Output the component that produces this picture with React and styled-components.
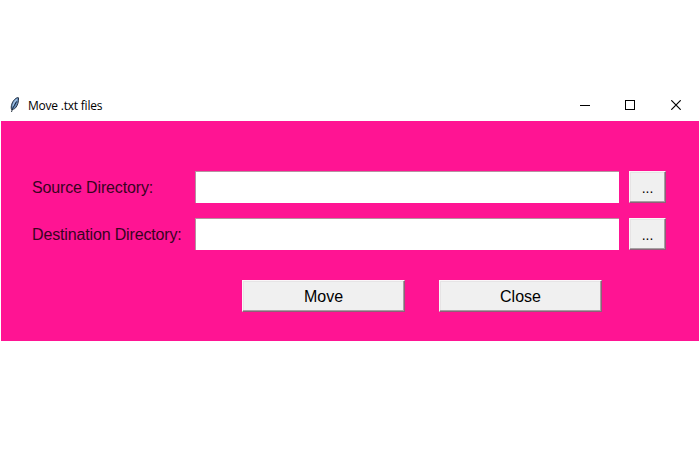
import React, { useState } from "react";
import styled, { createGlobalStyle } from "styled-components";

const GlobalStyle = createGlobalStyle`
  * { box-sizing: border-box; }
  body { margin: 0; background: #fff; }
`;

const Page = styled.main`
  height: 467px;
  padding: 89px 1px 0;
  background: #fff;
  font-family: "Liberation Sans", Arial, sans-serif;
`;

const TitleBar = styled.header`
  display: flex;
  align-items: center;
  height: 32px;
  padding-left: 7px;
`;

const Title = styled.h1`
  flex: 1;
  margin: 1px 0 0 7px;
  font: 400 12px/16px "Open Sans", "Noto Sans", sans-serif;
  letter-spacing: -0.22px;
  color: #000;
`;

const WindowControl = styled.button`
  display: flex;
  align-items: center;
  justify-content: center;
  width: ${(p) => p.$width}px;
  height: 32px;
  padding: 0;
  border: 0;
  background: transparent;
`;

const Form = styled.form`
  height: 220px;
  padding: 50px 33px 0 31px;
  background: #ff1493;
`;

const Field = styled.div`
  display: grid;
  grid-template-columns: 163px 424px 47px;
  align-items: start;
  height: 47px;
`;

const Label = styled.label`
  font-size: 16px;
  line-height: 34px;
  letter-spacing: -0.15px;
  white-space: nowrap;
  color: #38031f;
`;

const Input = styled.input`
  width: 424px;
  height: 32px;
  padding: 0 4px;
  border: 0 solid #b5929f;
  border-width: 1px 0 0 1px;
  border-radius: 0;
  background: #fff;
  font: 16px "Liberation Sans", Arial, sans-serif;
  outline: none;
`;

const Button = styled.button`
  width: ${(p) => p.$width}px;
  height: 32px;
  padding: 2px 0 0;
  border: 1px solid;
  border-color: #fbf6f8 #8e6078 #8e6078 #fbf6f8;
  border-radius: 0;
  background: #f0f0f0;
  box-shadow: inset -1px -1px #a5a0a2, inset 1px 1px #e6e4e5;
  color: #000;
  font: 16px/28px "Liberation Sans", Arial, sans-serif;
`;

const BrowseButton = styled(Button)`
  margin-left: 10px;
  font-size: 14px;
`;

const Actions = styled.div`
  display: flex;
  gap: 34px;
  padding: 15px 0 0 210px;
`;

function FeatherIcon() {
  return (
    <svg width="13" height="18" viewBox="0 0 13 18" aria-hidden="true">
      <path d="M3.5 13.5C2.6 10.5 4 5.8 6.8 3.3C8.2 2 9.7 1.2 10.5 1.8C10.9 5.5 9.6 9.5 7.6 11.8C6.4 13.1 5 13.3 4 13.5Z" fill="#678dbb" stroke="#182536" strokeWidth=".9" />
      <path d="M5 10.5C5.4 7.5 7 4.8 9 3.2" fill="none" stroke="#a5c5e5" strokeWidth="1.1" />
      <path d="M3.5 16L4.6 12.5L8.6 5.5" fill="none" stroke="#101c2b" strokeWidth=".9" />
    </svg>
  );
}

function DirectoryField({ id, label }) {
  const [value, setValue] = useState("");
  return (
    <Field>
      <Label htmlFor={id}>{label}</Label>
      <Input id={id} value={value} onChange={(e) => setValue(e.target.value)} />
      <BrowseButton type="button" $width={37}>...</BrowseButton>
    </Field>
  );
}

export default function App() {
  return (
    <Page>
      <GlobalStyle />
      <TitleBar>
        <FeatherIcon />
        <Title>Move .txt files</Title>
        <WindowControl $width={45} aria-label="Minimize">
          <svg width="10" height="10" shapeRendering="crispEdges"><path d="M0 5.5H10" stroke="#000" /></svg>
        </WindowControl>
        <WindowControl $width={46} aria-label="Maximize">
          <svg width="10" height="10" shapeRendering="crispEdges"><rect x=".5" y=".5" width="9" height="9" fill="none" stroke="#000" /></svg>
        </WindowControl>
        <WindowControl $width={46} aria-label="Close window">
          <svg width="10" height="10"><path d="M.3.3L9.7 9.7M9.7.3L.3 9.7" stroke="#000" strokeWidth="1.2" /></svg>
        </WindowControl>
      </TitleBar>
      <Form onSubmit={(e) => e.preventDefault()}>
        <DirectoryField id="source" label="Source Directory:" />
        <DirectoryField id="destination" label="Destination Directory:" />
        <Actions>
          <Button type="submit" $width={163}>Move</Button>
          <Button type="button" $width={163}>Close</Button>
        </Actions>
      </Form>
    </Page>
  );
}
